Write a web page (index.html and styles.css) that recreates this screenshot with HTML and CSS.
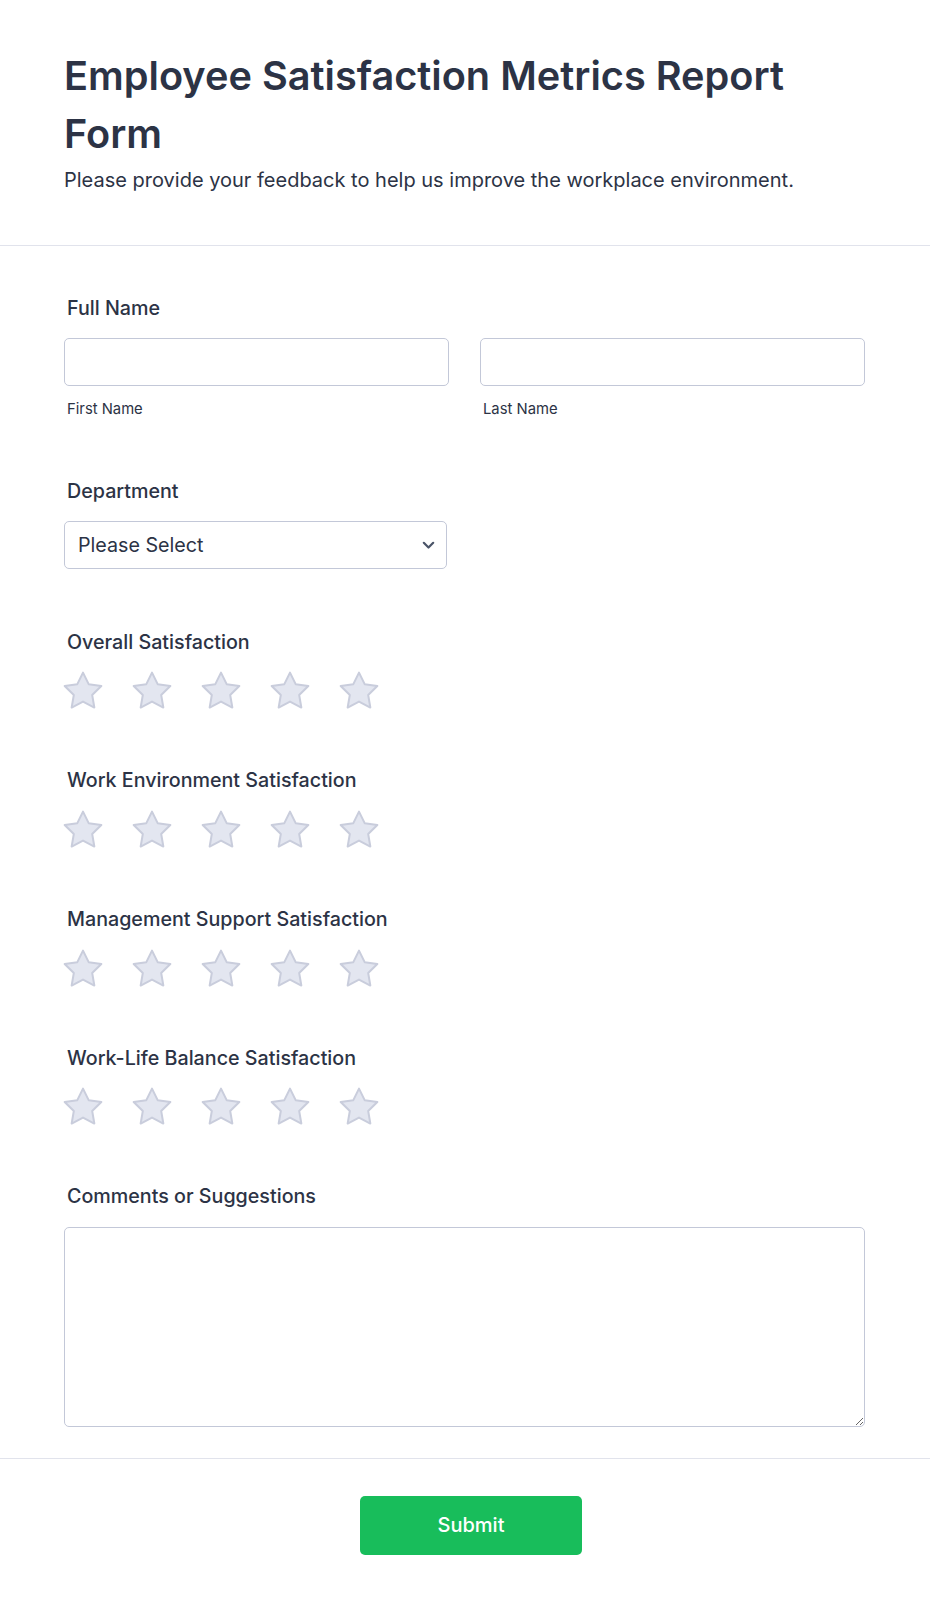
FILE: index.html
```html
<!DOCTYPE html>
<html lang="en">
<head>
<meta charset="utf-8">
<title>Employee Satisfaction Metrics Report Form</title>
<link rel="stylesheet" href="styles.css">
</head>
<body>
<header class="form-header">
  <h1 class="form-title">Employee Satisfaction Metrics Report Form</h1>
  <p class="form-subtitle">Please provide your feedback to help us improve the workplace environment.</p>
</header>

<form class="form-body">
  <div class="field field-name">
    <label class="field-label">Full Name</label>
    <div class="name-row">
      <div class="name-col">
        <input class="text-input" type="text">
        <span class="sublabel">First Name</span>
      </div>
      <div class="name-col">
        <input class="text-input" type="text">
        <span class="sublabel">Last Name</span>
      </div>
    </div>
  </div>

  <div class="field field-select">
    <label class="field-label">Department</label>
    <div class="select-wrap">
      <select class="select-input">
        <option>Please Select</option>
      </select>
      <svg class="chevron" width="13" height="9" viewBox="0 0 13 9"><path d="M1.8 1.8 6.5 6.5l4.7-4.7" fill="none" stroke="#4a5468" stroke-width="2.2" stroke-linecap="round" stroke-linejoin="round"/></svg>
    </div>
  </div>

  <div class="field field-stars">
    <label class="field-label">Overall Satisfaction</label>
    <div class="stars">
      <svg class="star" viewBox="0 0 24 24"><path d="M12 2l3.09 6.26L22 9.27l-5 4.87 1.18 6.88L12 17.77l-6.18 3.25L7 14.14 2 9.27l6.91-1.01L12 2z"/></svg>
      <svg class="star" viewBox="0 0 24 24"><path d="M12 2l3.09 6.26L22 9.27l-5 4.87 1.18 6.88L12 17.77l-6.18 3.25L7 14.14 2 9.27l6.91-1.01L12 2z"/></svg>
      <svg class="star" viewBox="0 0 24 24"><path d="M12 2l3.09 6.26L22 9.27l-5 4.87 1.18 6.88L12 17.77l-6.18 3.25L7 14.14 2 9.27l6.91-1.01L12 2z"/></svg>
      <svg class="star" viewBox="0 0 24 24"><path d="M12 2l3.09 6.26L22 9.27l-5 4.87 1.18 6.88L12 17.77l-6.18 3.25L7 14.14 2 9.27l6.91-1.01L12 2z"/></svg>
      <svg class="star" viewBox="0 0 24 24"><path d="M12 2l3.09 6.26L22 9.27l-5 4.87 1.18 6.88L12 17.77l-6.18 3.25L7 14.14 2 9.27l6.91-1.01L12 2z"/></svg>
    </div>
  </div>

  <div class="field field-stars">
    <label class="field-label">Work Environment Satisfaction</label>
    <div class="stars">
      <svg class="star" viewBox="0 0 24 24"><path d="M12 2l3.09 6.26L22 9.27l-5 4.87 1.18 6.88L12 17.77l-6.18 3.25L7 14.14 2 9.27l6.91-1.01L12 2z"/></svg>
      <svg class="star" viewBox="0 0 24 24"><path d="M12 2l3.09 6.26L22 9.27l-5 4.87 1.18 6.88L12 17.77l-6.18 3.25L7 14.14 2 9.27l6.91-1.01L12 2z"/></svg>
      <svg class="star" viewBox="0 0 24 24"><path d="M12 2l3.09 6.26L22 9.27l-5 4.87 1.18 6.88L12 17.77l-6.18 3.25L7 14.14 2 9.27l6.91-1.01L12 2z"/></svg>
      <svg class="star" viewBox="0 0 24 24"><path d="M12 2l3.09 6.26L22 9.27l-5 4.87 1.18 6.88L12 17.77l-6.18 3.25L7 14.14 2 9.27l6.91-1.01L12 2z"/></svg>
      <svg class="star" viewBox="0 0 24 24"><path d="M12 2l3.09 6.26L22 9.27l-5 4.87 1.18 6.88L12 17.77l-6.18 3.25L7 14.14 2 9.27l6.91-1.01L12 2z"/></svg>
    </div>
  </div>

  <div class="field field-stars">
    <label class="field-label">Management Support Satisfaction</label>
    <div class="stars">
      <svg class="star" viewBox="0 0 24 24"><path d="M12 2l3.09 6.26L22 9.27l-5 4.87 1.18 6.88L12 17.77l-6.18 3.25L7 14.14 2 9.27l6.91-1.01L12 2z"/></svg>
      <svg class="star" viewBox="0 0 24 24"><path d="M12 2l3.09 6.26L22 9.27l-5 4.87 1.18 6.88L12 17.77l-6.18 3.25L7 14.14 2 9.27l6.91-1.01L12 2z"/></svg>
      <svg class="star" viewBox="0 0 24 24"><path d="M12 2l3.09 6.26L22 9.27l-5 4.87 1.18 6.88L12 17.77l-6.18 3.25L7 14.14 2 9.27l6.91-1.01L12 2z"/></svg>
      <svg class="star" viewBox="0 0 24 24"><path d="M12 2l3.09 6.26L22 9.27l-5 4.87 1.18 6.88L12 17.77l-6.18 3.25L7 14.14 2 9.27l6.91-1.01L12 2z"/></svg>
      <svg class="star" viewBox="0 0 24 24"><path d="M12 2l3.09 6.26L22 9.27l-5 4.87 1.18 6.88L12 17.77l-6.18 3.25L7 14.14 2 9.27l6.91-1.01L12 2z"/></svg>
    </div>
  </div>

  <div class="field field-stars">
    <label class="field-label">Work-Life Balance Satisfaction</label>
    <div class="stars">
      <svg class="star" viewBox="0 0 24 24"><path d="M12 2l3.09 6.26L22 9.27l-5 4.87 1.18 6.88L12 17.77l-6.18 3.25L7 14.14 2 9.27l6.91-1.01L12 2z"/></svg>
      <svg class="star" viewBox="0 0 24 24"><path d="M12 2l3.09 6.26L22 9.27l-5 4.87 1.18 6.88L12 17.77l-6.18 3.25L7 14.14 2 9.27l6.91-1.01L12 2z"/></svg>
      <svg class="star" viewBox="0 0 24 24"><path d="M12 2l3.09 6.26L22 9.27l-5 4.87 1.18 6.88L12 17.77l-6.18 3.25L7 14.14 2 9.27l6.91-1.01L12 2z"/></svg>
      <svg class="star" viewBox="0 0 24 24"><path d="M12 2l3.09 6.26L22 9.27l-5 4.87 1.18 6.88L12 17.77l-6.18 3.25L7 14.14 2 9.27l6.91-1.01L12 2z"/></svg>
      <svg class="star" viewBox="0 0 24 24"><path d="M12 2l3.09 6.26L22 9.27l-5 4.87 1.18 6.88L12 17.77l-6.18 3.25L7 14.14 2 9.27l6.91-1.01L12 2z"/></svg>
    </div>
  </div>

  <div class="field field-last">
    <label class="field-label">Comments or Suggestions</label>
    <textarea class="textarea-input"></textarea>
  </div>
</form>

<footer class="form-footer">
  <button class="submit-btn" type="button">Submit</button>
</footer>
</body>
</html>
```

FILE: styles.css
```css
* { box-sizing: border-box; }

html, body {
  margin: 0;
  padding: 0;
  background: #ffffff;
}

body {
  font-family: Inter, "Noto Sans", "Liberation Sans", sans-serif;
  color: #2c3345;
}

.form-header {
  padding: 48px 64px 50px 64px;
  border-bottom: 1px solid #e1e3ec;
}

.form-title {
  margin: 0;
  max-width: 790px;
  font-size: 39.7px;
  line-height: 57.6px;
  font-weight: 600;
  color: #2c3345;
}

.form-subtitle {
  margin: 1.5px 0 0 0;
  font-size: 20px;
  line-height: 30px;
  font-weight: 400;
  color: #2c3345;
}

.form-body {
  padding: 48px 65px 31px 64px;
  border-bottom: 1px solid #e1e3ec;
}

.field {
  display: flex;
  flex-direction: column;
  margin-bottom: 56px;
}

.field-select { margin-bottom: 58.6px; }
.field-stars { margin-bottom: 53px; }
.field-last { margin-bottom: 0; }

.field-label {
  display: block;
  padding-left: 3px;
  font-size: 19.7px;
  line-height: 28.8px;
  font-weight: 500;
  color: #2c3345;
  margin-bottom: 15.6px;
}

.field-stars .field-label { margin-bottom: 12.9px; }

.name-row {
  display: flex;
  gap: 31px;
}

.name-col {
  display: flex;
  flex-direction: column;
  width: 385px;
}

.text-input {
  height: 48px;
  width: 100%;
  border: 1px solid #c3c8d8;
  border-radius: 5px;
  background: #fff;
  font-family: inherit;
  font-size: 19.7px;
  padding: 0 14px;
  outline: none;
}

.sublabel {
  margin-top: 12px;
  padding-left: 3px;
  font-size: 14.8px;
  line-height: 22.5px;
  color: #2c3345;
}

.select-wrap {
  position: relative;
  width: 383px;
}

.select-input {
  -webkit-appearance: none;
  appearance: none;
  width: 100%;
  height: 48px;
  border: 1px solid #c3c8d8;
  border-radius: 5px;
  background: #fff;
  font-family: inherit;
  font-size: 19.7px;
  color: #2c3345;
  padding: 0 40px 0 13px;
  outline: none;
}

.chevron {
  position: absolute;
  right: 12px;
  top: 20px;
  pointer-events: none;
}

.stars {
  display: flex;
  gap: 25px;
  margin-left: -3px;
}

.star {
  width: 44px;
  height: 44px;
  display: block;
}

.star path {
  fill: #e3e6f0;
  stroke: #c9cddc;
  stroke-width: 1.1;
  stroke-linejoin: round;
}

.textarea-input {
  display: block;
  width: 801px;
  height: 200px;
  border: 1px solid #c3c8d8;
  border-radius: 5px;
  font-family: inherit;
  font-size: 19.7px;
  padding: 12px 14px;
  resize: both;
  outline: none;
}

.form-footer {
  display: flex;
  justify-content: center;
  padding: 37px 0 50px 12px;
}

.submit-btn {
  width: 222px;
  height: 59px;
  border: none;
  border-radius: 5px;
  background: #18bd5b;
  color: #ffffff;
  font-family: inherit;
  font-size: 20px;
  font-weight: 500;
  cursor: pointer;
}
```
